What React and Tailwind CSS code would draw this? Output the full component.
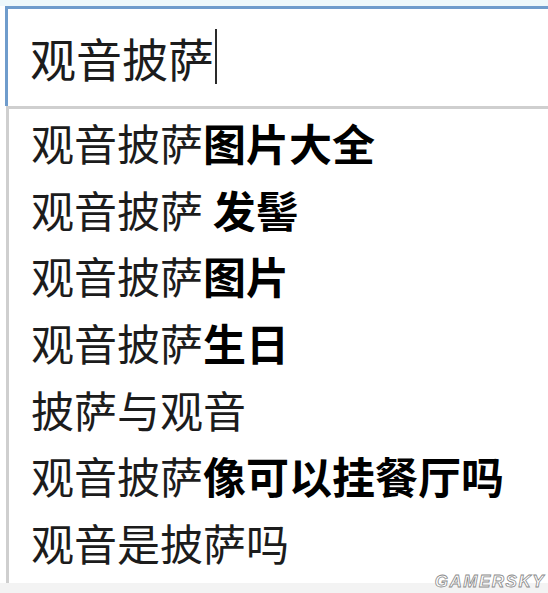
export default function App() {
  const rows = [
    ["观音披萨", "图片大全"],
    ["观音披萨 ", "发髻"],
    ["观音披萨", "图片"],
    ["观音披萨", "生日"],
    ["披萨与观音", ""],
    ["观音披萨", "像可以挂餐厅吗"],
    ["观音是披萨吗", ""],
  ];
  return (
    <div className="relative w-[548px] h-[593px] overflow-hidden bg-white font-['Noto_Sans_CJK_SC','Noto_Sans',sans-serif] text-[#1c1c1c]">
      <div className="h-[6px] bg-[#eef8fb]" />
      <div className="ml-[5px] h-[100px] border-t-[3px] border-l-[3px] border-[#6f9ccc] pl-[22px] pt-[20px]">
        <div className="flex h-[55px] items-center">
          <span className="text-[46px] leading-none">观音披萨</span>
          <span className="ml-[1px] h-[55px] w-[2px] bg-[#2a2a2a]" />
        </div>
      </div>
      <div className="ml-[6px] h-[477px] border-t-[3px] border-l-[3px] border-[#cfcfcf]">
        {rows.map(([a, b], i) => (
          <div key={i} className="flex h-[66.7px] items-center pl-[22px] text-[43px] leading-none whitespace-pre">
            <span>{a}</span>
            {b && <span className="font-bold text-black">{b}</span>}
          </div>
        ))}
      </div>
      <div className="h-[10px] bg-[#f3f3f3]" />
      <div className="absolute right-[3px] bottom-[3px] font-['Liberation_Sans',sans-serif] text-[17px] font-bold italic tracking-[1.5px] leading-none text-white [-webkit-text-stroke:0.8px_#8a8a8a]">
        GAMERSKY
      </div>
    </div>
  );
}
